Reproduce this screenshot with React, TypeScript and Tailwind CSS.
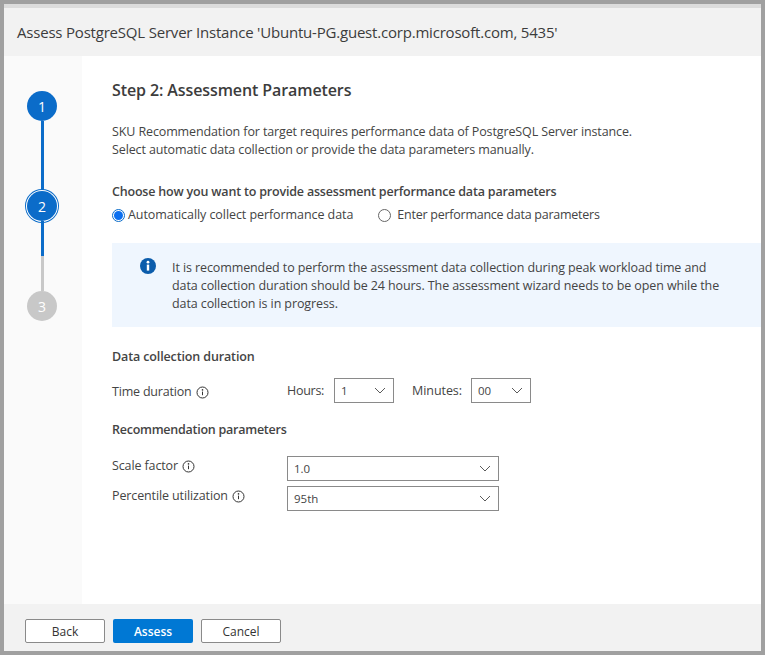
import React from "react";

const Chevron = () => (
  <svg width="12" height="7" viewBox="0 0 12 7" fill="none" className="shrink-0">
    <path d="M1 1l5 5 5-5" stroke="#5a5a5a" strokeWidth="1" />
  </svg>
);

const InfoSmall = () => (
  <svg width="13" height="13" viewBox="0 0 13 13" fill="none" className="shrink-0">
    <circle cx="6.5" cy="6.5" r="5.5" stroke="#333" strokeWidth="1" />
    <path d="M6.5 5.6v3.6" stroke="#333" strokeWidth="1" />
    <circle cx="6.5" cy="3.9" r="0.8" fill="#333" />
  </svg>
);

const Select = ({ value, className }: { value: string; className: string }) => (
  <div className={`flex h-[25px] items-center justify-between border border-[#8a8a8a] bg-white pl-[6px] pr-[7px] text-[11.5px] text-[#444] ${className}`}>
    <span>{value}</span>
    <Chevron />
  </div>
);

const Step = ({ n, state }: { n: number; state: "done" | "active" | "todo" }) => (
  <div
    className={`flex h-[30px] w-[30px] items-center justify-center rounded-full text-[14px] text-white ${
      state === "todo" ? "bg-[#c8c8c8]" : "bg-[#0b6cc9]"
    } ${state === "active" ? "shadow-[0_0_0_1px_#ffffff,0_0_0_2px_#0b6cc9]" : ""}`}
  >
    {n}
  </div>
);

const App = () => {
  return (
    <div className="flex h-[655px] w-[765px] flex-col overflow-hidden border-4 border-[#a0a0a0] bg-white font-['Open_Sans',sans-serif] text-[12.5px] text-[#444]">
      <div className="h-[4px] bg-[#dcdcdc]" />
      <div className="flex h-[48px] items-center bg-[#f2f2f2] pl-[13px] text-[15px] tracking-[-0.2px] text-[#3c3c3c]">
        Assess PostgreSQL Server Instance 'Ubuntu-PG.guest.corp.microsoft.com, 5435'
      </div>

      <div className="flex min-h-0 flex-1">
        <div className="flex w-[78px] flex-col items-center bg-[#fafafa] pr-[2px] pt-[35px]">
          <Step n={1} state="done" />
          <div className="h-[70px] w-[3px] bg-[#0b6cc9]" />
          <Step n={2} state="active" />
          <div className="h-[35px] w-[3px] bg-[#0b6cc9]" />
          <div className="h-[35px] w-[3px] bg-[#c8c8c8]" />
          <Step n={3} state="todo" />
        </div>

        <div className="flex-1 pl-[30px] pt-[22px]">
          <h1 className="text-[16px] font-semibold leading-[24px] tracking-[-0.1px] text-[#3c3c3c]">Step 2: Assessment Parameters</h1>
          <p className="mt-[21px] leading-[18px] tracking-[-0.12px]">
            SKU Recommendation for target requires performance data of PostgreSQL Server instance.
            <br />
            Select automatic data collection or provide the data parameters manually.
          </p>

          <div className="mt-[23px] font-semibold leading-[20px] tracking-[-0.19px]">Choose how you want to provide assessment performance data parameters</div>
          <div className="mt-[4px] flex h-[19px] items-center">
            <span className="flex h-[13px] w-[13px] items-center justify-center rounded-full border border-[#0b6cc9]">
              <span className="h-[9px] w-[9px] rounded-full bg-[#0b6ff0]" />
            </span>
            <span className="ml-[3px] tracking-[-0.07px]">Automatically collect performance data</span>
            <span className="ml-[25px] h-[13px] w-[13px] rounded-full border border-[#666]" />
            <span className="ml-[6px] tracking-[-0.25px]">Enter performance data parameters</span>
          </div>

          <div className="mt-[18px] flex h-[84px] bg-[#eff6fe] pl-[28px] pt-[15px]">
            <svg width="16" height="16" viewBox="0 0 16 16" className="shrink-0">
              <circle cx="8" cy="8" r="8" fill="#0b5cab" />
              <rect x="6.8" y="6.6" width="2.4" height="6" fill="#fff" />
              <circle cx="8" cy="4.2" r="1.4" fill="#fff" />
            </svg>
            <p className="ml-[16px] mt-[1px] w-[555px] leading-[18px] tracking-[-0.1px]">
              It is recommended to perform the assessment data collection during peak workload time and data collection duration should be 24 hours. The assessment wizard needs to be open while the data collection is in progress.
            </p>
          </div>

          <div className="mt-[20px] font-semibold leading-[20px] tracking-[-0.13px]">Data collection duration</div>

          <div className="mt-[11px] flex items-start">
            <div className="mt-[5px] flex w-[175px] items-center gap-[5px] tracking-[-0.2px]">
              Time duration <InfoSmall />
            </div>
            <span className="mt-[4px] tracking-[-0.28px]">Hours:</span>
            <Select value="1" className="ml-[10px] w-[60px]" />
            <span className="ml-[18px] mt-[4px] tracking-[-0.07px]">Minutes:</span>
            <Select value="00" className="ml-[9px] w-[60px]" />
          </div>

          <div className="mt-[17px] font-semibold leading-[20px] tracking-[-0.25px]">Recommendation parameters</div>

          <div className="mt-[16px] flex flex-col gap-[5px]">
            <div className="flex items-start">
              <div className="mt-[1px] flex w-[175px] items-center gap-[4px] tracking-[-0.12px]">
                Scale factor <InfoSmall />
              </div>
              <Select value="1.0" className="w-[212px]" />
            </div>
            <div className="flex items-start">
              <div className="mt-[1px] flex w-[175px] items-center gap-[4px] tracking-[-0.12px]">
                Percentile utilization <InfoSmall />
              </div>
              <Select value="95th" className="w-[212px]" />
            </div>
          </div>
        </div>
      </div>

      <div className="flex h-[47px] items-center gap-[8px] bg-[#f2f2f2] pl-[21px] pt-[7px] text-[12px] font-medium">
        <button className="h-[24px] w-[80px] rounded-[2px] border border-[#8a8a8a] bg-white pt-[1px] text-[#333]">Back</button>
        <button className="h-[24px] w-[80px] rounded-[2px] bg-[#0078d4] pt-[1px] font-semibold text-white">Assess</button>
        <button className="h-[24px] w-[80px] rounded-[2px] border border-[#8a8a8a] bg-white pt-[1px] text-[#333]">Cancel</button>
      </div>
    </div>
  );
};

export default App;
